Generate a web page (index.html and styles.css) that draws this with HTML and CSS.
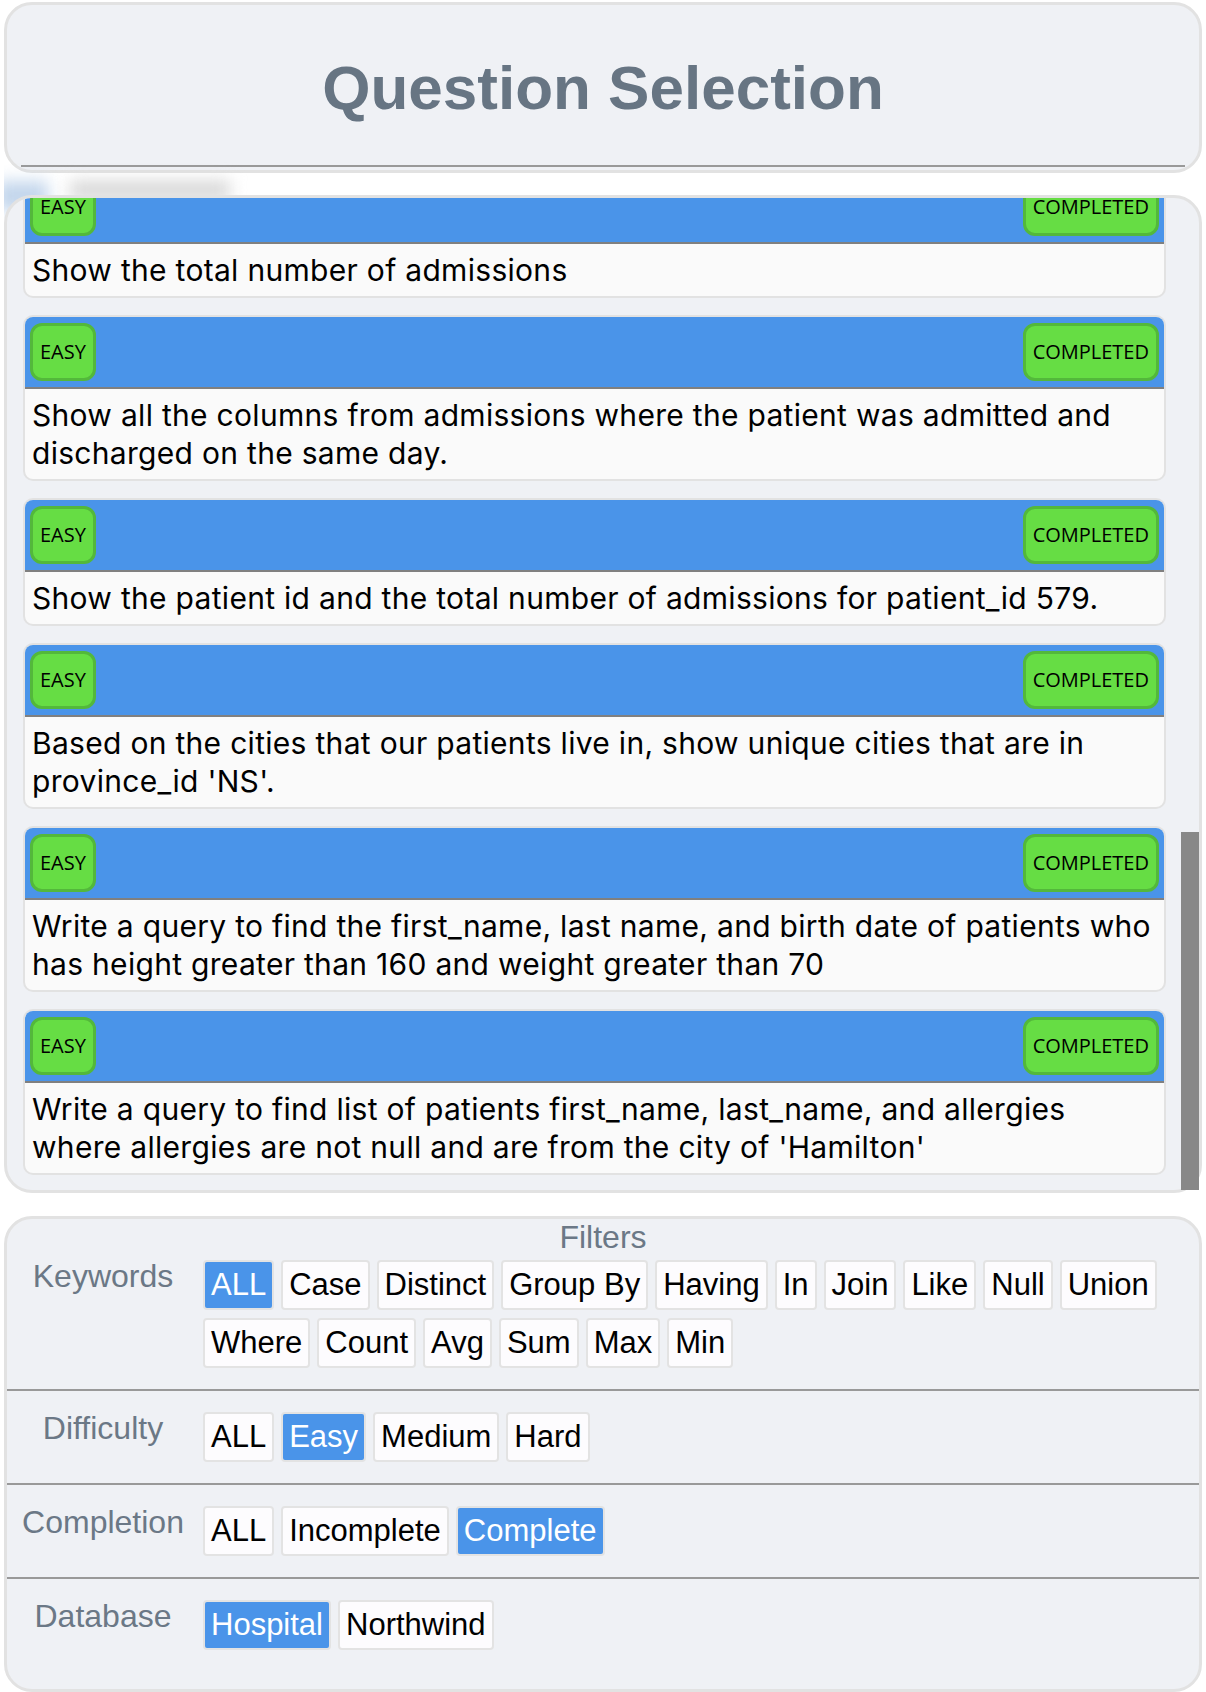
FILE: index.html
```html
<!DOCTYPE html>
<html lang="en">
<head>
<meta charset="utf-8">
<title>Question Selection</title>
<link rel="stylesheet" href="styles.css">
</head>
<body>
<header class="panel title-panel">
  <h1 class="title">Question Selection</h1>
</header>
<div class="blur-strip" aria-hidden="true"><span class="blob blob-blue"></span><span class="blob blob-gray"></span></div>
<section class="panel list-panel">
  <div class="list-scroll">
    <div class="list">
      <article class="card"><div class="card-head"><span class="badge">EASY</span><span class="badge">COMPLETED</span></div><p class="card-body">Show first name, last name, and gender of patients whose gender is 'M'</p></article>
      <article class="card"><div class="card-head"><span class="badge">EASY</span><span class="badge">COMPLETED</span></div><p class="card-body">Show first name and last name of patients who does not have allergies. (null)</p></article>
      <article class="card"><div class="card-head"><span class="badge">EASY</span><span class="badge">COMPLETED</span></div><p class="card-body">Show first name of patients that start with the letter 'C'</p></article>
      <article class="card"><div class="card-head"><span class="badge">EASY</span><span class="badge">COMPLETED</span></div><p class="card-body">Show first name and last name of patients that weight within the range of 100 to 120 (inclusive)</p></article>
      <article class="card"><div class="card-head"><span class="badge">EASY</span><span class="badge">COMPLETED</span></div><p class="card-body">Update the patients table for the allergies column. If the patient's allergies is null then replace it with 'NKA'</p></article>
      <article class="card"><div class="card-head"><span class="badge">EASY</span><span class="badge">COMPLETED</span></div><p class="card-body">Show first name and last name concatinated into one column to show their full name.</p></article>
      <article class="card"><div class="card-head"><span class="badge">EASY</span><span class="badge">COMPLETED</span></div><p class="card-body">Show first name, last name, and the full province name of each patient. Example: 'Ontario' instead of 'ON'</p></article>
      <article class="card"><div class="card-head"><span class="badge">EASY</span><span class="badge">COMPLETED</span></div><p class="card-body">Show how many patients have a birth_date with 2010 as the birth year.</p></article>
      <article class="card"><div class="card-head"><span class="badge">EASY</span><span class="badge">COMPLETED</span></div><p class="card-body">Show the first_name, last_name, and height of the patient with the greatest height.</p></article>
      <article class="card"><div class="card-head"><span class="badge">EASY</span><span class="badge">COMPLETED</span></div><p class="card-body">Show all columns for patients who have one of the following patient_ids: 1,45,534,879,1000</p></article>
      <article class="card"><div class="card-head"><span class="badge">EASY</span><span class="badge">COMPLETED</span></div><p class="card-body">Show the total number of admissions</p></article>
      <article class="card"><div class="card-head"><span class="badge">EASY</span><span class="badge">COMPLETED</span></div><p class="card-body">Show all the columns from admissions where the patient was admitted and discharged on the same day.</p></article>
      <article class="card"><div class="card-head"><span class="badge">EASY</span><span class="badge">COMPLETED</span></div><p class="card-body">Show the patient id and the total number of admissions for patient_id 579.</p></article>
      <article class="card"><div class="card-head"><span class="badge">EASY</span><span class="badge">COMPLETED</span></div><p class="card-body">Based on the cities that our patients live in, show unique cities that are in province_id 'NS'.</p></article>
      <article class="card"><div class="card-head"><span class="badge">EASY</span><span class="badge">COMPLETED</span></div><p class="card-body">Write a query to find the first_name, last name, and birth date of patients who has height greater than 160 and weight greater than 70</p></article>
      <article class="card"><div class="card-head"><span class="badge">EASY</span><span class="badge">COMPLETED</span></div><p class="card-body">Write a query to find list of patients first_name, last_name, and allergies where allergies are not null and are from the city of 'Hamilton'</p></article>
    </div>
  </div>
  <div class="scroll-thumb" aria-hidden="true"></div>
</section>
<section class="panel filters">
  <h2 class="filters-title">Filters</h2>
  <div class="filter-row first">
    <div class="filter-label">Keywords</div>
    <div class="chips">
      <button type="button" class="chip active">ALL</button>
      <button type="button" class="chip">Case</button>
      <button type="button" class="chip">Distinct</button>
      <button type="button" class="chip">Group By</button>
      <button type="button" class="chip">Having</button>
      <button type="button" class="chip">In</button>
      <button type="button" class="chip">Join</button>
      <button type="button" class="chip">Like</button>
      <button type="button" class="chip">Null</button>
      <button type="button" class="chip">Union</button>
      <button type="button" class="chip">Where</button>
      <button type="button" class="chip">Count</button>
      <button type="button" class="chip">Avg</button>
      <button type="button" class="chip">Sum</button>
      <button type="button" class="chip">Max</button>
      <button type="button" class="chip">Min</button>
    </div>
  </div>
  <div class="filter-row">
    <div class="filter-label">Difficulty</div>
    <div class="chips">
      <button type="button" class="chip">ALL</button>
      <button type="button" class="chip active">Easy</button>
      <button type="button" class="chip">Medium</button>
      <button type="button" class="chip">Hard</button>
    </div>
  </div>
  <div class="filter-row">
    <div class="filter-label">Completion</div>
    <div class="chips">
      <button type="button" class="chip">ALL</button>
      <button type="button" class="chip">Incomplete</button>
      <button type="button" class="chip active">Complete</button>
    </div>
  </div>
  <div class="filter-row last">
    <div class="filter-label">Database</div>
    <div class="chips">
      <button type="button" class="chip active">Hospital</button>
      <button type="button" class="chip">Northwind</button>
    </div>
  </div>
</section>
</body>
</html>
```

FILE: styles.css
```css
* { box-sizing: border-box; }

html, body { background: #ffffff; }

body {
  margin: 2px 4px 0;
  font-family: "Liberation Sans", Arial, sans-serif;
  color: #000;
}

.panel {
  background: #eff1f5;
  border: 3px solid #e2e2e2;
  border-radius: 28px;
}

/* ---------- title ---------- */
.title-panel {
  height: 171px;
  padding: 0 14px 3px;
}

.title {
  margin: 0;
  height: 100%;
  padding-top: 47px;
  border-bottom: 2px solid #999999;
  text-align: center;
  font-family: "Liberation Sans", Arial, sans-serif;
  font-weight: bold;
  font-size: 62px;
  line-height: 71px;
  color: #677583;
}

/* ---------- blurred strip between panels ---------- */
.blur-strip {
  height: 22px;
  padding-top: 8px;
  display: flex;
  align-items: flex-start;
  gap: 22px;
}

.blob {
  display: block;
  flex: none;
  filter: blur(8px);
}

.blob-blue {
  width: 52px;
  height: 30px;
  margin-left: -8px;
  background: #c3d6ec;
}

.blob-gray {
  width: 160px;
  height: 18px;
  background: #d6d6d6;
}

/* ---------- question list ---------- */
.list-panel {
  position: relative;
  height: 998px;
}

.list-scroll {
  height: 100%;
  display: flex;
  flex-direction: column-reverse;
  overflow: hidden;
  border-radius: 25px;
}

.list {
  flex: none;
  display: flex;
  flex-direction: column;
  gap: 17px;
  padding: 16px 33px 15px 16px;
}

.scroll-thumb {
  position: absolute;
  right: 0;
  bottom: 0;
  width: 18px;
  height: 358px;
  background: #888888;
}

.card {
  border: 2px solid #e2e2e2;
  border-radius: 10px;
  overflow: hidden;
  background: #fafafa;
}

.card-head {
  height: 72px;
  padding: 0 5px;
  display: flex;
  align-items: center;
  justify-content: space-between;
  background: #4a94e9;
  border-bottom: 2px solid #808080;
}

.badge {
  height: 58px;
  padding: 0 7px;
  border: 3px solid #53b83b;
  border-radius: 12px;
  background: #66dd44;
  font-family: "Open Sans", "Noto Sans", sans-serif;
  font-size: 20px;
  line-height: 52px;
  color: #000;
}

.card-body {
  margin: 0;
  padding: 7px;
  font-family: Inter, Roboto, sans-serif;
  font-size: 30px;
  letter-spacing: 0.3px;
  line-height: 38px;
  color: #000;
}

/* ---------- filters ---------- */
.filters {
  margin-top: 23px;
  height: 476px;
  padding: 0 0 17px;
}

.filters-title {
  margin: 0;
  text-align: center;
  font-weight: normal;
  font-size: 32px;
  line-height: 37px;
  color: #6b7886;
}

.filter-row {
  display: flex;
  align-items: flex-start;
  padding: 21px 0;
  border-bottom: 2px solid #999999;
}

.filter-row.first { padding-top: 4px; }
.filter-row.last { border-bottom: none; }

.filter-label {
  flex: none;
  width: 192px;
  margin-right: 4px;
  text-align: center;
  font-size: 32px;
  line-height: 32px;
  color: #6b7886;
}

.chips {
  flex: 1;
  display: flex;
  flex-wrap: wrap;
  gap: 8px 7px;
}

.chip {
  margin: 0;
  padding: 6px 6px;
  border: 2px solid #e3e3e3;
  border-radius: 4px;
  background: #fdfcfe;
  font-family: "Liberation Sans", Arial, sans-serif;
  font-size: 31px;
  line-height: 34px;
  color: #000;
}

.chip.active {
  background: #4a94e9;
  color: #ffffff;
}
```
